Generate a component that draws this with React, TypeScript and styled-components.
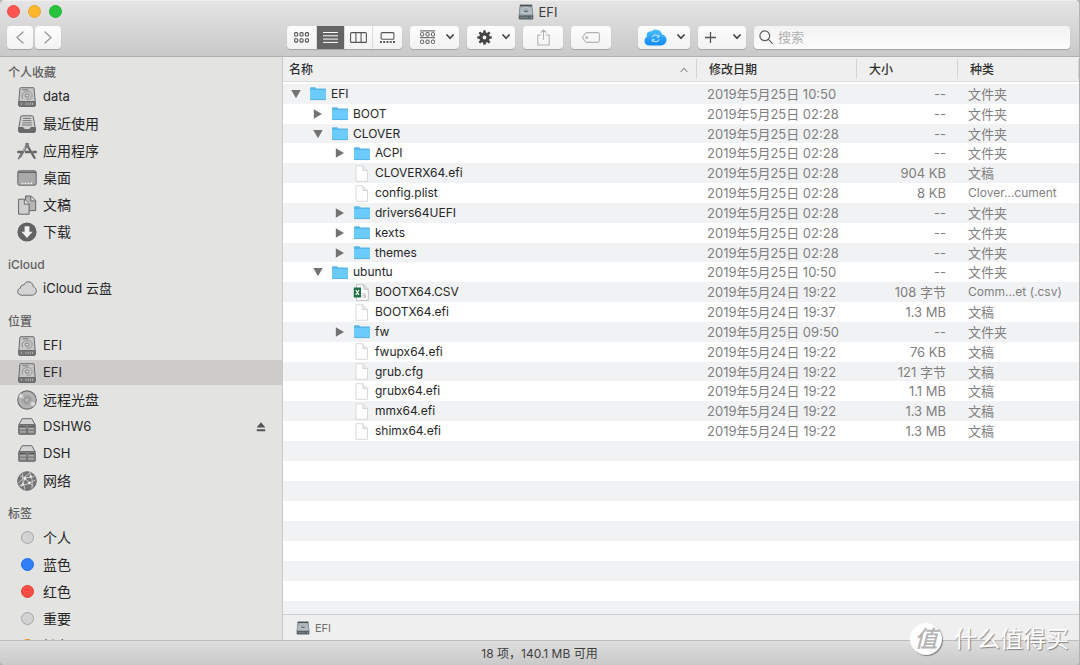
import React from "react";
import styled, { createGlobalStyle } from "styled-components";

const GlobalStyle = createGlobalStyle`
  *, *::before, *::after { box-sizing: border-box; }
  body {
    margin: 0;
    background: #b4b4b4;
    color: #262626;
    font-family: Inter, "Noto Sans CJK SC", "Liberation Sans", sans-serif;
    font-size: 12px;
  }
  button, input { font: inherit; color: inherit; }
  a { color: inherit; text-decoration: none; }
  svg { display: block; flex: none; }
`;

/* ---------- window frame ---------- */

const Window = styled.div`
  position: relative;
  display: flex;
  flex-direction: column;
  height: 100vh;
  overflow: hidden;
  border-radius: 5px;
  border-right: 1px solid #b4b4b4;
  background: #e3e3e2;
`;

const Chrome = styled.header`
  flex: none;
  border-top: 1px solid #efefef;
  border-bottom: 1px solid #b1b1b1;
  background: linear-gradient(#e4e4e4, #c9c9c9);
`;

const TitleBar = styled.div`
  display: grid;
  grid-template-columns: 1fr auto 1fr;
  align-items: center;
  height: 21px;
  padding: 0 11px 0 7px;
`;

const Lights = styled.div`
  display: flex;
  gap: 8px;
`;

const Light = styled.button<{ $fill: string; $edge: string }>`
  width: 13px;
  height: 13px;
  padding: 0;
  border: 1px solid ${(p) => p.$edge};
  border-radius: 50%;
  background: ${(p) => p.$fill};
`;

const Title = styled.h1`
  display: flex;
  align-items: center;
  gap: 5px;
  margin: 0;
  color: #3b3b3b;
  font-size: 13px;
  font-weight: 400;
  line-height: 16px;
`;

const Toolbar = styled.div`
  display: flex;
  align-items: center;
  gap: 8px;
  height: 34px;
  padding: 0 9px 4px 7px;
`;

const NavGroup = styled.div`
  display: flex;
  gap: 2px;
  width: 272px;
`;

const ToolButton = styled.button<{ $width: number; $faint?: boolean; $gap?: boolean }>`
  display: flex;
  align-items: center;
  justify-content: center;
  flex: none;
  width: ${(p) => p.$width}px;
  height: 23px;
  padding: 0;
  margin-left: ${(p) => (p.$gap ? 19 : 0)}px;
  border: 0;
  border-radius: 4px;
  background: linear-gradient(#fdfdfd, #f2f2f2);
  box-shadow: 0 1px 1px rgba(0, 0, 0, 0.2);
  color: ${(p) => (p.$faint ? "#b3b3b3" : "#555")};
`;

const MenuButton = styled(ToolButton)<{ $lead: number }>`
  justify-content: space-between;
  padding: 0 5px 0 ${(p) => p.$lead}px;
`;

const Segments = styled.div`
  display: flex;
  flex: none;
  height: 23px;
  overflow: hidden;
  border-radius: 4px;
  background: linear-gradient(#fdfdfd, #f2f2f2);
  box-shadow: 0 1px 1px rgba(0, 0, 0, 0.2);
`;

const Segment = styled.button<{ $on?: boolean }>`
  display: flex;
  align-items: center;
  justify-content: center;
  width: 28px;
  padding: 0;
  border: 0;
  border-right: 1px solid #dcdcdc;
  background: ${(p) => (p.$on ? "#646464" : "transparent")};
  color: ${(p) => (p.$on ? "#fff" : "#555")};
  &:first-child { width: 30px; }
  &:last-child { border-right: 0; width: 29px; }
`;

const Search = styled.label`
  display: flex;
  align-items: center;
  gap: 5px;
  flex: 1;
  min-width: 0;
  height: 23px;
  padding: 0 5px;
  border-radius: 4px;
  background: linear-gradient(#f3f3f3, #fcfcfc);
  box-shadow: 0 1px 1px rgba(0, 0, 0, 0.2);
  color: #5f5f5f;
`;

const SearchInput = styled.input`
  flex: 1;
  min-width: 0;
  height: 21px;
  padding: 0;
  border: 0;
  outline: 0;
  background: transparent;
  font-size: 13px;
  &::placeholder { color: #b2b2b2; opacity: 1; }
`;

const Body = styled.div`
  display: flex;
  flex: 1;
  min-height: 0;
`;

/* ---------- sidebar ---------- */

const Sidebar = styled.nav`
  flex: none;
  width: 283px;
  padding-top: 5px;
  overflow: hidden;
  border-right: 1px solid #c9c9c9;
  background: #e3e3e2;
`;

const Section = styled.section`
  margin-bottom: 10px;
`;

const SectionTitle = styled.h2`
  margin: 0;
  padding-left: 8px;
  color: #5f5f5f;
  font-size: 12px;
  font-weight: 500;
  line-height: 21px;
`;

const Items = styled.ul`
  margin: 0;
  padding: 0;
  list-style: none;
`;

const Item = styled.li<{ $on?: boolean }>`
  display: flex;
  align-items: center;
  height: 25px;
  margin: 1px 0 2px;
  padding: 0 16px 0 17px;
  background: ${(p) => (p.$on ? "#cecccb" : "transparent")};
  & + & { margin-top: 0; }
`;

const ItemLink = styled.a`
  display: flex;
  align-items: center;
  gap: 6px;
  flex: 1;
  font-size: 14px;
  line-height: 25px;
`;

const LatinItem = styled.span`
  font-size: 13px;
`;

const IconSlot = styled.span`
  display: flex;
  justify-content: center;
  flex: none;
  width: 20px;
`;

const Dot = styled.span<{ $fill: string; $edge: string }>`
  width: 13px;
  height: 13px;
  border: 1px solid ${(p) => p.$edge};
  border-radius: 50%;
  background: ${(p) => p.$fill};
`;

const PlainButton = styled.button`
  display: flex;
  align-items: center;
  justify-content: center;
  padding: 0;
  border: 0;
  background: none;
`;

/* ---------- list ---------- */

const Main = styled.main`
  display: flex;
  flex-direction: column;
  flex: 1;
  min-width: 0;
  background: #fff;
`;

const ListArea = styled.div`
  flex: 1;
  min-height: 0;
  overflow: hidden;
`;

const Table = styled.table`
  width: 100%;
  height: 384px;
  border-collapse: collapse;
  border-spacing: 0;
  table-layout: fixed;
`;

const Col = styled.col<{ $width?: number }>`
  width: ${(p) => (p.$width ? `${p.$width}px` : "auto")};
`;

const HeadRow = styled.tr`
  height: 27px;
  background: linear-gradient(#efefef 24px, #dadada 24px, #dadada 25px, #fff 25px);
`;

const HeadCell = styled.th<{ $first?: boolean }>`
  padding: 0 9px 2px ${(p) => (p.$first ? 6 : 12)}px;
  background: linear-gradient(#d4d4d4, #d4d4d4) right 2px / 1px 20px no-repeat;
  background-position: right 0 top 2px;
  color: #2e2e2e;
  font-size: 12px;
  font-weight: 500;
  line-height: 17px;
  text-align: left;
`;

const HeadLabel = styled.span`
  display: flex;
  align-items: center;
  justify-content: space-between;
`;

const Row = styled.tr`
  &:nth-child(odd) { background: #f1f2f4; }
`;

const Cell = styled.td<{ $right?: boolean; $small?: boolean }>`
  padding: 0 ${(p) => (p.$right ? 12 : 0)}px 0 10px;
  overflow: hidden;
  color: #7f7f7f;
  font-size: ${(p) => (p.$small ? 12 : 13)}px;
  line-height: 16px;
  text-align: ${(p) => (p.$right ? "right" : "left")};
  white-space: nowrap;
`;

const NameCell = styled.td<{ $depth: number }>`
  padding: 0 0 0 ${(p) => 5 + p.$depth * 22}px;
`;

const NameLine = styled.div`
  display: flex;
  align-items: center;
  height: 16px;
  color: #262626;
  font-size: 12px;
  line-height: 16px;
`;

const Disclosure = styled.span`
  display: flex;
  justify-content: center;
  flex: none;
  width: 16px;
  margin-right: 5px;
`;

const FileName = styled.span`
  margin-left: 4px;
`;

const EmptyRows = styled.div`
  height: 100%;
  background: repeating-linear-gradient(#f1f2f4 0 20px, #fff 20px 40px);
`;

const PathBar = styled.footer`
  display: flex;
  align-items: center;
  gap: 5px;
  flex: none;
  height: 26px;
  padding-left: 13px;
  border-top: 1px solid #d0d0d0;
  background: #efefef;
  color: #6f6f6f;
  font-size: 11px;
  line-height: 16px;
`;

const StatusBar = styled.footer`
  display: flex;
  align-items: center;
  justify-content: center;
  flex: none;
  height: 25px;
  padding-bottom: 2px;
  border-top: 1px solid #bdbdbd;
  background: linear-gradient(#dedede, #c9c9c9);
  color: #3f3f3f;
  font-size: 12px;
`;

const Watermark = styled.div`
  position: absolute;
  right: 10px;
  bottom: 10px;
  display: flex;
  align-items: center;
  gap: 12px;
  color: #fff;
  font-size: 23px;
  line-height: 32px;
  text-shadow: 1px 1px 1px rgba(0, 0, 0, 0.4);
`;

const Seal = styled.span`
  display: flex;
  align-items: center;
  justify-content: center;
  width: 32px;
  height: 32px;
  border-radius: 50%;
  background: #fff;
  box-shadow: 1px 1px 1px rgba(0, 0, 0, 0.4);
  color: #b4b4b4;
  font-size: 23px;
  font-weight: 500;
  font-style: italic;
  text-shadow: none;
`;

/* ---------- drawings ---------- */

const Chevron = () => (
  <svg width="8" height="6" viewBox="0 0 8 6" fill="none" stroke="#444" strokeWidth="1.7" strokeLinecap="round" strokeLinejoin="round">
    <path d="M1 1l3 3.3L7 1" />
  </svg>
);

const NavArrow = ({ back }: { back?: boolean }) => (
  <svg width="8" height="13" viewBox="0 0 8 13" fill="none" stroke="#999" strokeWidth="1.3" strokeLinecap="round" strokeLinejoin="round">
    <path d={back ? "M7 1L1 6.5 7 12" : "M1 1l6 5.5L1 12"} />
  </svg>
);

const tiles = (y: number) => [0.6, 6, 11.4].map((x) => <rect key={`${x}-${y}`} x={x} y={y} width="3.1" height="3.4" rx="1" />);

const GridIcon = () => (
  <svg width="15" height="11" viewBox="0 0 15 11" fill="none" stroke="currentColor" strokeWidth="1.1">
    {tiles(0.6)}
    {tiles(6.7)}
  </svg>
);

const ListIcon = () => (
  <svg width="15" height="11" viewBox="0 0 15 11" stroke="currentColor" strokeWidth="1">
    <path d="M0 .5h15M0 3.8h15M0 7.1h15M0 10.4h15" />
  </svg>
);

const ColumnsIcon = () => (
  <svg width="17" height="11" viewBox="0 0 17 11" fill="none" stroke="currentColor" strokeWidth="1.1">
    <rect x=".6" y=".6" width="15.8" height="9.8" rx="1" />
    <path d="M5.9.6v9.8M11.1.6v9.8" />
  </svg>
);

const GalleryIcon = () => (
  <svg width="15" height="11" viewBox="0 0 15 11" fill="none" stroke="currentColor" strokeWidth="1.1">
    <rect x="1.1" y=".6" width="12.8" height="6.6" rx="1" />
    <path d="M0 10h15" strokeWidth="1.8" strokeDasharray="1.9 1.35" />
  </svg>
);

const GroupIcon = () => (
  <svg width="15" height="15" viewBox="0 0 15 15" fill="none" stroke="currentColor" strokeWidth="1">
    <path d="M0 .9h15M0 7.7h15" />
    {tiles(2.6)}
    {tiles(10.1)}
  </svg>
);

const GearIcon = () => (
  <svg width="15" height="15" viewBox="-7.5 -7.5 15 15" fill="#444">
    {[0, 45, 90, 135, 180, 225, 270, 315].map((a) => (
      <path key={a} d="M-1.5-4.2L-1.1-7.3H1.1L1.5-4.2z" transform={`rotate(${a})`} />
    ))}
    <path fillRule="evenodd" d="M0-5.2A5.2 5.2 0 1 1 0 5.2 5.2 5.2 0 1 1 0-5.2zM0-1.9A1.9 1.9 0 1 0 0 1.9 1.9 1.9 0 1 0 0-1.9z" />
  </svg>
);

const ShareIcon = () => (
  <svg width="13" height="17" viewBox="0 0 13 17" fill="none" stroke="currentColor" strokeWidth="1.1" strokeLinejoin="round">
    <path d="M4.3 6H.8v10h11.4V6H8.7M6.5 11V1M3.7 3.7L6.5.9l2.8 2.8" />
  </svg>
);

const TagIcon = () => (
  <svg width="18" height="11" viewBox="0 0 18 11" fill="none" stroke="currentColor" strokeWidth="1.1" strokeLinejoin="round">
    <path d="M5 .6h10.5a1.900 1.900 0 0 1 1.900 1.900v6a1.900 1.900 0 0 1-1.900 1.900H5Q4 10.400 3.200 9.500L.9 6.400q-.7-.9 0-1.800L3.200 1.500Q4 .6 5 .6z" />
    <circle cx="4.700" cy="5.500" r="1" />
  </svg>
);

const SyncCloudIcon = () => (
  <svg width="23" height="17" viewBox="0 0 23 17">
    <defs>
      <linearGradient id="sync-cloud" x2="0" y2="1">
        <stop stopColor="#4cc0ff" />
        <stop offset="1" stopColor="#1089ff" />
      </linearGradient>
    </defs>
    <path d="M5.400 16.500C2.300 16.500.5 14.500.5 11.900c0-2 1-3.300 2.400-3.900C2 4.200 4.500 1.900 7.400 2.400 8.700.9 10.400.4 12.100.5c3 .1 5.400 1.900 6 4.900 2.600.5 4.400 2.700 4.400 5.400 0 3.300-2.400 5.700-5.500 5.700z" fill="url(#sync-cloud)" />
    <path d="M8.200 8.300a3.700 3.700 0 0 1 6.600-.6M15 5.900v2.200h-2.200M15.200 10.300a3.700 3.700 0 0 1-6.600.8M8.300 12.900v-2.200h2.200" fill="none" stroke="#d9f1ff" strokeWidth="1" />
  </svg>
);

const PlusIcon = () => (
  <svg width="13" height="13" viewBox="0 0 13 13" stroke="currentColor" strokeWidth="1.3">
    <path d="M6.500 1v11M1 6.500h11" />
  </svg>
);

const SearchIcon = () => (
  <svg width="14" height="14" viewBox="0 0 14 14" fill="none" stroke="currentColor" strokeWidth="1.2" strokeLinecap="round">
    <circle cx="5.800" cy="5.800" r="4.900" />
    <path d="M9.400 9.400l3.900 3.900" />
  </svg>
);

const DiskImage = ({ size }: { size: number }) => (
  <svg width={size} height={size} viewBox="0 0 16 16">
    <defs>
      <linearGradient id="disk-face" x2="0" y2="1">
        <stop stopColor="#98a3a8" />
        <stop offset=".8" stopColor="#b4bfc4" />
        <stop offset="1" stopColor="#8d989d" />
      </linearGradient>
    </defs>
    <path d="M1.900.8h12.200l1.200 10.400v3.500q0 .8-.8.8h-13q-.8 0-.8-.8v-3.500z" fill="#59636a" />
    <path d="M2.300 1h11.400l1.100 10.400H1.200z" fill="url(#disk-face)" />
    <path d="M2 .8h12v1.500H2z" fill="#4a5053" />
    <ellipse cx="8" cy="6.300" rx="4" ry="3.100" fill="#a5b0b5" stroke="#d0d7da" strokeWidth=".6" />
    <path d="M6.200 7q1.800 1.200 3.600 0" fill="none" stroke="#4f5558" strokeWidth=".9" />
    <path d="M2 13.400h8" stroke="#7d878c" strokeWidth=".9" />
    <circle cx="13.300" cy="13.500" r=".6" fill="#b9d7c1" />
  </svg>
);

const DriveIcon = () => (
  <svg width="18" height="20" viewBox="0 0 18 20" fill="none" stroke="#6a6a6a" strokeWidth="1">
    <path d="M2.700.7h12.600q.7 0 .8.800l1.100 13v3.900q0 .9-.9.900H1.700q-.9 0-.9-.9v-3.900l1.100-13q.1-.8.800-.8z" fill="#c6c6c6" />
    <path d="M.8 14.500h16.400v3.900q0 .9-.9.900H1.700q-.9 0-.9-.9z" fill="#757575" />
    <path d="M3.300 15.600v2.500M8 15.600v2.500M10.200 15.600v2.500M12.400 15.600v2.500M14.600 15.600v2.500" stroke="#b9b9b9" strokeWidth=".8" />
    <path d="M4.500 2.800h6" stroke="#777" />
    <path d="M4.600 11.600c-1.200-3.600 0-6.300 3.600-6.900s6 .9 5.900 4c-.1 2.600-2.500 4.300-5.600 3.400" stroke="#8b8b8b" strokeWidth=".9" />
    <ellipse cx="9.200" cy="8.600" rx="2" ry="1.600" fill="#d8d8d8" stroke="#6f6f6f" strokeWidth=".9" />
  </svg>
);

const RecentsIcon = () => (
  <svg width="18" height="18" viewBox="0 0 18 18" fill="none" stroke="#666" strokeWidth="1">
    <path d="M3.700.8h10.600q.8 0 .9.800l2 11.100v3.400q0 1.100-1.100 1.100H1.900Q.8 17.200.8 16.100v-3.400l2-11.100q.1-.8.9-.8z" fill="#d2d2d2" />
    <path d="M5 3.400h8M4.600 5.600h8.800M4.200 7.800h9.600M3.800 10h10.400" stroke="#777" />
    <path d="M.8 12.600h4.400q.6 2 1.900 2h3.800q1.300 0 1.900-2h4.400v3.500q0 1.100-1.100 1.100H1.900Q.8 17.200.8 16.100z" fill="#6a6a6a" />
  </svg>
);

const AppsIcon = () => (
  <svg width="20" height="18" viewBox="0 0 20 18" fill="none" stroke="#666">
    <path d="M9 1.200l8.600 14.700" strokeWidth="2.200" />
    <path d="M11.200 1.200L2.700 15.400" strokeWidth="2.600" stroke="#787878" />
    <path d="M.3 10h5.200M8 10h5M15.300 10h4.500" strokeWidth="2.400" />
    <path d="M2.700 14.600l-1.500 2.600M16.300 14.200l2.200 2.600" strokeWidth="1.300" />
    <path d="M8.200 5.200L6 9" stroke="#dedede" strokeWidth=".8" />
  </svg>
);

const DesktopIcon = () => (
  <svg width="20" height="16" viewBox="0 0 20 16" fill="none" stroke="#666">
    <rect x=".8" y=".8" width="18.400" height="14.400" rx="1.500" fill="#a9a9a9" />
    <path d="M1 2.300h18" strokeWidth="1.200" />
    <path d="M4.700 13.400h10.600" stroke="#f3f3f3" strokeWidth="1.500" strokeDasharray="1.700 1.200" />
  </svg>
);

const DocsIcon = () => (
  <svg width="20" height="20" viewBox="0 0 20 20" fill="#cfcfcf" stroke="#666" strokeWidth="1" strokeLinejoin="round">
    <path d="M8.500 1h5.700l4.500 4.600v10H8.500z" fill="#b5b5b5" />
    <path d="M13.800 1.200v4.700h4.700" fill="#ddd" />
    <path d="M1.600 4.200h5.900l4.600 4.700v10.300H1.600z" />
    <path d="M7.300 4.400v4.700H12" fill="#e5e5e5" />
  </svg>
);

const DownloadIcon = () => (
  <svg width="20" height="20" viewBox="0 0 20 20">
    <circle cx="10" cy="10" r="9.600" fill="#636363" />
    <path d="M7.600 4.300h4.800v5.500h3.200L10 16 4.400 9.800h3.200z" fill="#f0f0f0" />
  </svg>
);

const CloudIcon = () => (
  <svg width="20" height="15" viewBox="0 0 20 15" fill="#d4d4d4" stroke="#6a6a6a" strokeWidth="1">
    <path d="M4.600 14.200C2.200 14.200.7 12.500.7 10.600c0-1.900 1.200-3.200 2.800-3.500-.2-2 1.400-3.400 3.300-3.100C7.600 1.900 9.300.8 11.300.8c2.700 0 4.900 2 5 4.900 1.800.6 3 2.100 3 4.100 0 2.500-1.900 4.400-4.200 4.400z" />
  </svg>
);

const DiscIcon = () => (
  <svg width="20" height="20" viewBox="0 0 20 20" fill="none" stroke="#737373">
    <circle cx="10" cy="10" r="9.200" fill="#b5b5b5" strokeWidth="1.200" />
    <path d="M10 10L4 3.200A9 9 0 0 0 1.500 7zM10 10l6 6.800a9 9 0 0 0 2.500-3.800z" fill="#dcdcdc" stroke="none" />
    <circle cx="10" cy="10" r="5" stroke="#9c9c9c" strokeWidth=".8" />
    <circle cx="10" cy="10" r="3.200" fill="#c9c9c9" strokeWidth=".9" />
    <circle cx="10" cy="10" r="1.400" fill="#eee" strokeWidth=".8" />
  </svg>
);

const ServerIcon = () => (
  <svg width="18" height="17" viewBox="0 0 18 17" fill="none" stroke="#6a6a6a" strokeWidth="1">
    <path d="M4.200.7h9.600l3.300 6H.9z" fill="#d4d4d4" />
    <rect x=".7" y="6.700" width="16.600" height="9.600" rx=".6" fill="#808080" />
    <path d="M1.800 8.500h3.700M6.700 8.500h1.100M10.200 8.500h1.100M12.500 8.500h3.700" stroke="#4f4f4f" />
    <path d="M2 10.800h6.300M9.700 10.800H16M2 13.900h6.300M9.700 13.900H16" stroke="#bcbcbc" />
    <path d="M9 10v6" stroke="#5c5c5c" strokeWidth=".8" />
  </svg>
);

const NetworkIcon = () => (
  <svg width="20" height="20" viewBox="0 0 20 20" fill="none" stroke="#d0d0d0" strokeWidth=".9">
    <circle cx="10" cy="10" r="9.300" fill="#757575" stroke="#666" />
    <path d="M3 4.800Q9 8 17.400 5.500M1.500 12Q6 6.500 13.500 1.600M5.500 2.500Q5 10 8 18.600M12.400 1.400Q16.500 8 14.800 17.300M2.300 14.500Q10 14.500 18.500 9M8 8l8.500 7M8 8l-4 8" />
    <g fill="#e8e8e8" stroke="none">
      <circle cx="8" cy="7.500" r="1.500" />
      <circle cx="13.700" cy="5.500" r="1.200" />
      <circle cx="12.300" cy="12" r="1.400" />
      <circle cx="5.700" cy="13.500" r="1.200" />
    </g>
  </svg>
);

const EjectIcon = () => (
  <svg width="10" height="10" viewBox="0 0 10 10" fill="#555">
    <path d="M5 .3l4.400 5.200H.6zM.8 7.300h8.400v2H.8z" />
  </svg>
);

const Triangle = ({ open }: { open: boolean }) => (
  <svg width="10" height="10" viewBox="0 0 10 10" fill="#737373">
    <path d={open ? "M.3 1h9.400L5 9.300z" : "M.8.3v9.400L9 5z"} />
  </svg>
);

const FolderIcon = () => (
  <svg width="18" height="15" viewBox="0 0 18 15">
    <path d="M1 2.200Q1 1.200 2 1.200h3.800q.6 0 1 .5l.6.800H16q1 0 1 1V13.200q0 .6-.6.600H1.600q-.6 0-.6-.6z" fill="#57b7ea" />
    <path d="M1 4h16v9q0 .6-.6.600H1.600Q1 13.600 1 13z" fill="#6bcbfc" />
    <path d="M1.200 13.600h15.600" stroke="#4da9dc" strokeWidth=".7" />
  </svg>
);

const FileIcon = () => (
  <svg width="18" height="17" viewBox="0 0 18 17" stroke="#cfcfcf" strokeWidth=".8" strokeLinejoin="round">
    <path d="M3 .7h7l4.500 4.700v10.900H3z" fill="#fff" />
    <path d="M9.800.8v4.700h4.600" fill="#ececec" />
  </svg>
);

const SheetIcon = () => (
  <svg width="18" height="17" viewBox="0 0 18 17" fill="none" strokeLinejoin="round">
    <path d="M3.500.7H11l4.300 4.500v11.100H3.500z" fill="#fff" stroke="#b5b5b5" strokeWidth=".8" />
    <path d="M10.800.8v4.500h4.400" fill="#e4e4e4" stroke="#b5b5b5" strokeWidth=".8" />
    <path d="M9.500 9.500q2.700-1 2.700 1v3.200m0-2.500q-3-.1-3 1.400t3 .3" stroke="#b0b0b0" strokeWidth=".9" />
    <rect x=".8" y="3.500" width="7.200" height="10" fill="#1e7145" />
    <path d="M2.800 6l3.200 5M6 6l-3.200 5" stroke="#fff" strokeWidth="1.200" />
  </svg>
);

const SortIcon = () => (
  <svg width="8" height="6" viewBox="0 0 8 6" fill="none" stroke="#8a8a8a" strokeWidth="1.100">
    <path d="M.6 5L4 1.200 7.400 5" />
  </svg>
);

/* ---------- data ---------- */

type Place = { label: string; icon: React.ReactNode; on?: boolean; eject?: boolean };

const grey = <Dot $fill="#d2d2d2" $edge="#a5a5a5" />;

const sections: { title: string; items: Place[] }[] = [
  {
    title: "个人收藏",
    items: [
      { label: "data", icon: <DriveIcon /> },
      { label: "最近使用", icon: <RecentsIcon /> },
      { label: "应用程序", icon: <AppsIcon /> },
      { label: "桌面", icon: <DesktopIcon /> },
      { label: "文稿", icon: <DocsIcon /> },
      { label: "下载", icon: <DownloadIcon /> },
    ],
  },
  { title: "iCloud", items: [{ label: "iCloud 云盘", icon: <CloudIcon /> }] },
  {
    title: "位置",
    items: [
      { label: "EFI", icon: <DriveIcon /> },
      { label: "EFI", icon: <DriveIcon />, on: true },
      { label: "远程光盘", icon: <DiscIcon /> },
      { label: "DSHW6", icon: <ServerIcon />, eject: true },
      { label: "DSH", icon: <ServerIcon /> },
      { label: "网络", icon: <NetworkIcon /> },
    ],
  },
  {
    title: "标签",
    items: [
      { label: "个人", icon: grey },
      { label: "蓝色", icon: <Dot $fill="#2f7ff7" $edge="#1a6df0" /> },
      { label: "红色", icon: <Dot $fill="#fb4e47" $edge="#ee3a34" /> },
      { label: "重要", icon: grey },
      { label: "橙色", icon: <Dot $fill="#f99a2c" $edge="#ea8414" /> },
    ],
  },
];

type Kind = "open" | "closed" | "file" | "sheet";
type Entry = [number, Kind, string, string, string, string];

const entries: Entry[] = [
  [0, "open", "EFI", "2019年5月25日 10:50", "--", "文件夹"],
  [1, "closed", "BOOT", "2019年5月25日 02:28", "--", "文件夹"],
  [1, "open", "CLOVER", "2019年5月25日 02:28", "--", "文件夹"],
  [2, "closed", "ACPI", "2019年5月25日 02:28", "--", "文件夹"],
  [2, "file", "CLOVERX64.efi", "2019年5月25日 02:28", "904 KB", "文稿"],
  [2, "file", "config.plist", "2019年5月25日 02:28", "8 KB", "Clover…cument"],
  [2, "closed", "drivers64UEFI", "2019年5月25日 02:28", "--", "文件夹"],
  [2, "closed", "kexts", "2019年5月25日 02:28", "--", "文件夹"],
  [2, "closed", "themes", "2019年5月25日 02:28", "--", "文件夹"],
  [1, "open", "ubuntu", "2019年5月25日 10:50", "--", "文件夹"],
  [2, "sheet", "BOOTX64.CSV", "2019年5月24日 19:22", "108 字节", "Comm…et (.csv)"],
  [2, "file", "BOOTX64.efi", "2019年5月24日 19:37", "1.3 MB", "文稿"],
  [2, "closed", "fw", "2019年5月25日 09:50", "--", "文件夹"],
  [2, "file", "fwupx64.efi", "2019年5月24日 19:22", "76 KB", "文稿"],
  [2, "file", "grub.cfg", "2019年5月24日 19:22", "121 字节", "文稿"],
  [2, "file", "grubx64.efi", "2019年5月24日 19:22", "1.1 MB", "文稿"],
  [2, "file", "mmx64.efi", "2019年5月24日 19:22", "1.3 MB", "文稿"],
  [2, "file", "shimx64.efi", "2019年5月24日 19:22", "1.3 MB", "文稿"],
];

const startsLatin = (s: string) => /^[A-Za-z]/.test(s);

export default function App() {
  return (
    <>
      <GlobalStyle />
      <Window>
        <Chrome>
          <TitleBar>
            <Lights>
              <Light aria-label="关闭" $fill="#fd5650" $edge="#ee4a44" />
              <Light aria-label="最小化" $fill="#fdb62b" $edge="#eda722" />
              <Light aria-label="缩放" $fill="#28c33c" $edge="#1eb431" />
            </Lights>
            <Title><DiskImage size={16} />EFI</Title>
          </TitleBar>
          <Toolbar>
            <NavGroup>
              <ToolButton $width={26} aria-label="后退"><NavArrow back /></ToolButton>
              <ToolButton $width={26} aria-label="前进"><NavArrow /></ToolButton>
            </NavGroup>
            <Segments role="group" aria-label="显示方式">
              <Segment aria-label="图标"><GridIcon /></Segment>
              <Segment aria-label="列表" aria-pressed="true" $on><ListIcon /></Segment>
              <Segment aria-label="分栏"><ColumnsIcon /></Segment>
              <Segment aria-label="画廊"><GalleryIcon /></Segment>
            </Segments>
            <MenuButton $width={49} $lead={10} aria-label="分组"><GroupIcon /><Chevron /></MenuButton>
            <MenuButton $width={48} $lead={10} aria-label="操作"><GearIcon /><Chevron /></MenuButton>
            <ToolButton $width={40} $faint aria-label="共享"><ShareIcon /></ToolButton>
            <ToolButton $width={40} $faint aria-label="标签"><TagIcon /></ToolButton>
            <MenuButton $width={52} $lead={6} $gap aria-label="同步"><SyncCloudIcon /><Chevron /></MenuButton>
            <MenuButton $width={48} $lead={6} aria-label="新建"><PlusIcon /><Chevron /></MenuButton>
            <Search>
              <SearchIcon />
              <SearchInput type="search" placeholder="搜索" aria-label="搜索" />
            </Search>
          </Toolbar>
        </Chrome>

        <Body>
          <Sidebar>
            {sections.map((s) => (
              <Section key={s.title}>
                <SectionTitle>{s.title}</SectionTitle>
                <Items>
                  {s.items.map((it, i) => (
                    <Item key={i} $on={it.on}>
                      <ItemLink href="#">
                        <IconSlot>{it.icon}</IconSlot>
                        {startsLatin(it.label) ? <LatinItem>{it.label}</LatinItem> : it.label}
                      </ItemLink>
                      {it.eject && <PlainButton aria-label="推出"><EjectIcon /></PlainButton>}
                    </Item>
                  ))}
                </Items>
              </Section>
            ))}
          </Sidebar>

          <Main>
            <ListArea>
              <Table>
                <colgroup>
                  <Col />
                  <Col $width={160} />
                  <Col $width={101} />
                  <Col $width={121} />
                </colgroup>
                <thead>
                  <HeadRow>
                    <HeadCell $first><HeadLabel>名称<SortIcon /></HeadLabel></HeadCell>
                    <HeadCell>修改日期</HeadCell>
                    <HeadCell>大小</HeadCell>
                    <HeadCell>种类</HeadCell>
                  </HeadRow>
                </thead>
                <tbody>
                  {entries.map(([depth, kind, name, date, size, type]) => (
                    <Row key={name}>
                      <NameCell $depth={depth}>
                        <NameLine>
                          <Disclosure>
                            {(kind === "open" || kind === "closed") && (
                              <PlainButton aria-label={name} aria-expanded={kind === "open"}>
                                <Triangle open={kind === "open"} />
                              </PlainButton>
                            )}
                          </Disclosure>
                          {kind === "file" ? <FileIcon /> : kind === "sheet" ? <SheetIcon /> : <FolderIcon />}
                          <FileName>{name}</FileName>
                        </NameLine>
                      </NameCell>
                      <Cell>{date}</Cell>
                      <Cell $right>{size}</Cell>
                      <Cell $small={startsLatin(type)}>{type}</Cell>
                    </Row>
                  ))}
                </tbody>
              </Table>
              <EmptyRows />
            </ListArea>
            <PathBar><DiskImage size={14} />EFI</PathBar>
          </Main>
        </Body>

        <StatusBar>18 项，140.1 MB 可用</StatusBar>
        <Watermark><Seal>值</Seal>什么值得买</Watermark>
      </Window>
    </>
  );
}
